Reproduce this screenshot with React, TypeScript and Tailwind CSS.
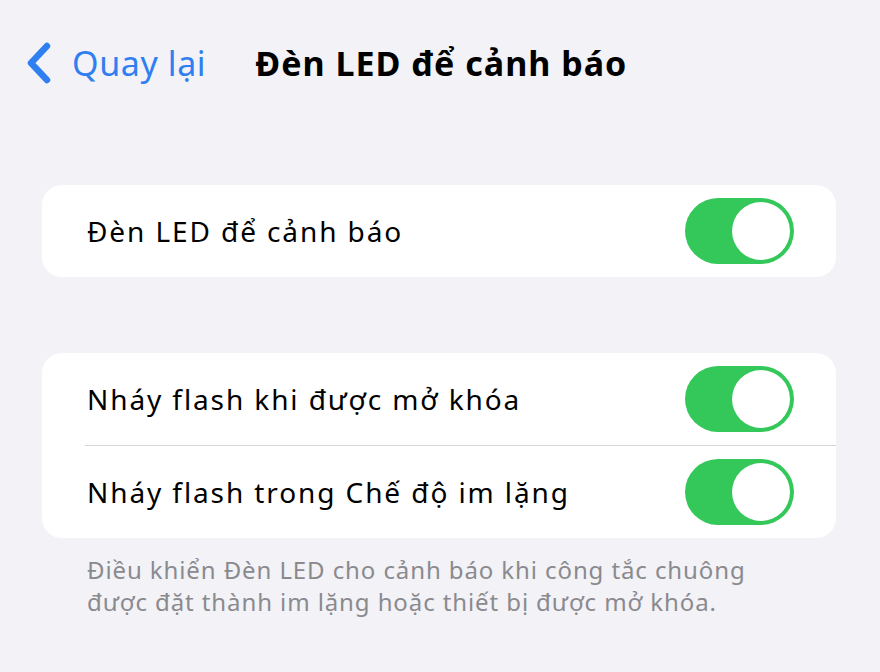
import { useState } from "react";

type ToggleProps = { on: boolean; onChange: (v: boolean) => void };

function Toggle({ on, onChange }: ToggleProps) {
  return (
    <button
      type="button"
      onClick={() => onChange(!on)}
      className={`relative h-[66px] w-[109px] shrink-0 rounded-full transition-colors ${
        on ? "bg-[#34c759]" : "bg-[#e5e5ea]"
      }`}
    >
      <span
        className={`absolute top-[4px] h-[58px] w-[58px] rounded-full bg-white transition-all ${
          on ? "left-[47px]" : "left-[4px]"
        }`}
      />
    </button>
  );
}

function Row({ label, on, onChange }: { label: string; on: boolean; onChange: (v: boolean) => void }) {
  return (
    <div className="flex h-[92px] items-center justify-between pl-[45px] pr-[42px]">
      <span className="text-[28px] tracking-[1.9px] text-black">{label}</span>
      <Toggle on={on} onChange={onChange} />
    </div>
  );
}

export default function App() {
  const [led, setLed] = useState(true);
  const [unlocked, setUnlocked] = useState(true);
  const [silent, setSilent] = useState(true);

  return (
    <div
      className="h-[672px] w-[880px] overflow-hidden bg-[#f2f2f7]"
      style={{ fontFamily: "'Noto Sans', 'Open Sans', sans-serif" }}
    >
      {/* Navigation bar */}
      <header className="mt-[41px] flex h-[44px] items-center pl-[25px]">
        <button className="flex items-center text-[#2f7ff0]">
          <svg width="28" height="42" viewBox="0 0 28 42" fill="none" className="mr-[19px]">
            <path d="M22 4 L6 21 L22 38" stroke="currentColor" strokeWidth="6.5" strokeLinecap="round" strokeLinejoin="round" />
          </svg>
          <span className="text-[34px] leading-none tracking-[0.6px]">Quay lại</span>
        </button>
        <h1 className="ml-[49px] text-[34px] font-bold leading-none tracking-[1px] text-black">Đèn LED để cảnh báo</h1>
      </header>

      <div className="ml-[42px] mt-[100px] w-[794px] rounded-[20px] bg-white">
        <Row label="Đèn LED để cảnh báo" on={led} onChange={setLed} />
      </div>

      <div className="ml-[42px] mt-[76px] w-[794px] rounded-[20px] bg-white">
        <Row label="Nháy flash khi được mở khóa" on={unlocked} onChange={setUnlocked} />
        <div className="ml-[43px] h-px bg-[#d6d6da]" />
        <Row label="Nháy flash trong Chế độ im lặng" on={silent} onChange={setSilent} />
      </div>

      <p className="ml-[87px] mt-[16px] w-[720px] text-[24px] leading-[32px] tracking-[0.9px] text-[#8a8a8e]">
        Điều khiển Đèn LED cho cảnh báo khi công tắc chuông được đặt thành im lặng hoặc thiết bị được mở khóa.
      </p>
    </div>
  );
}
